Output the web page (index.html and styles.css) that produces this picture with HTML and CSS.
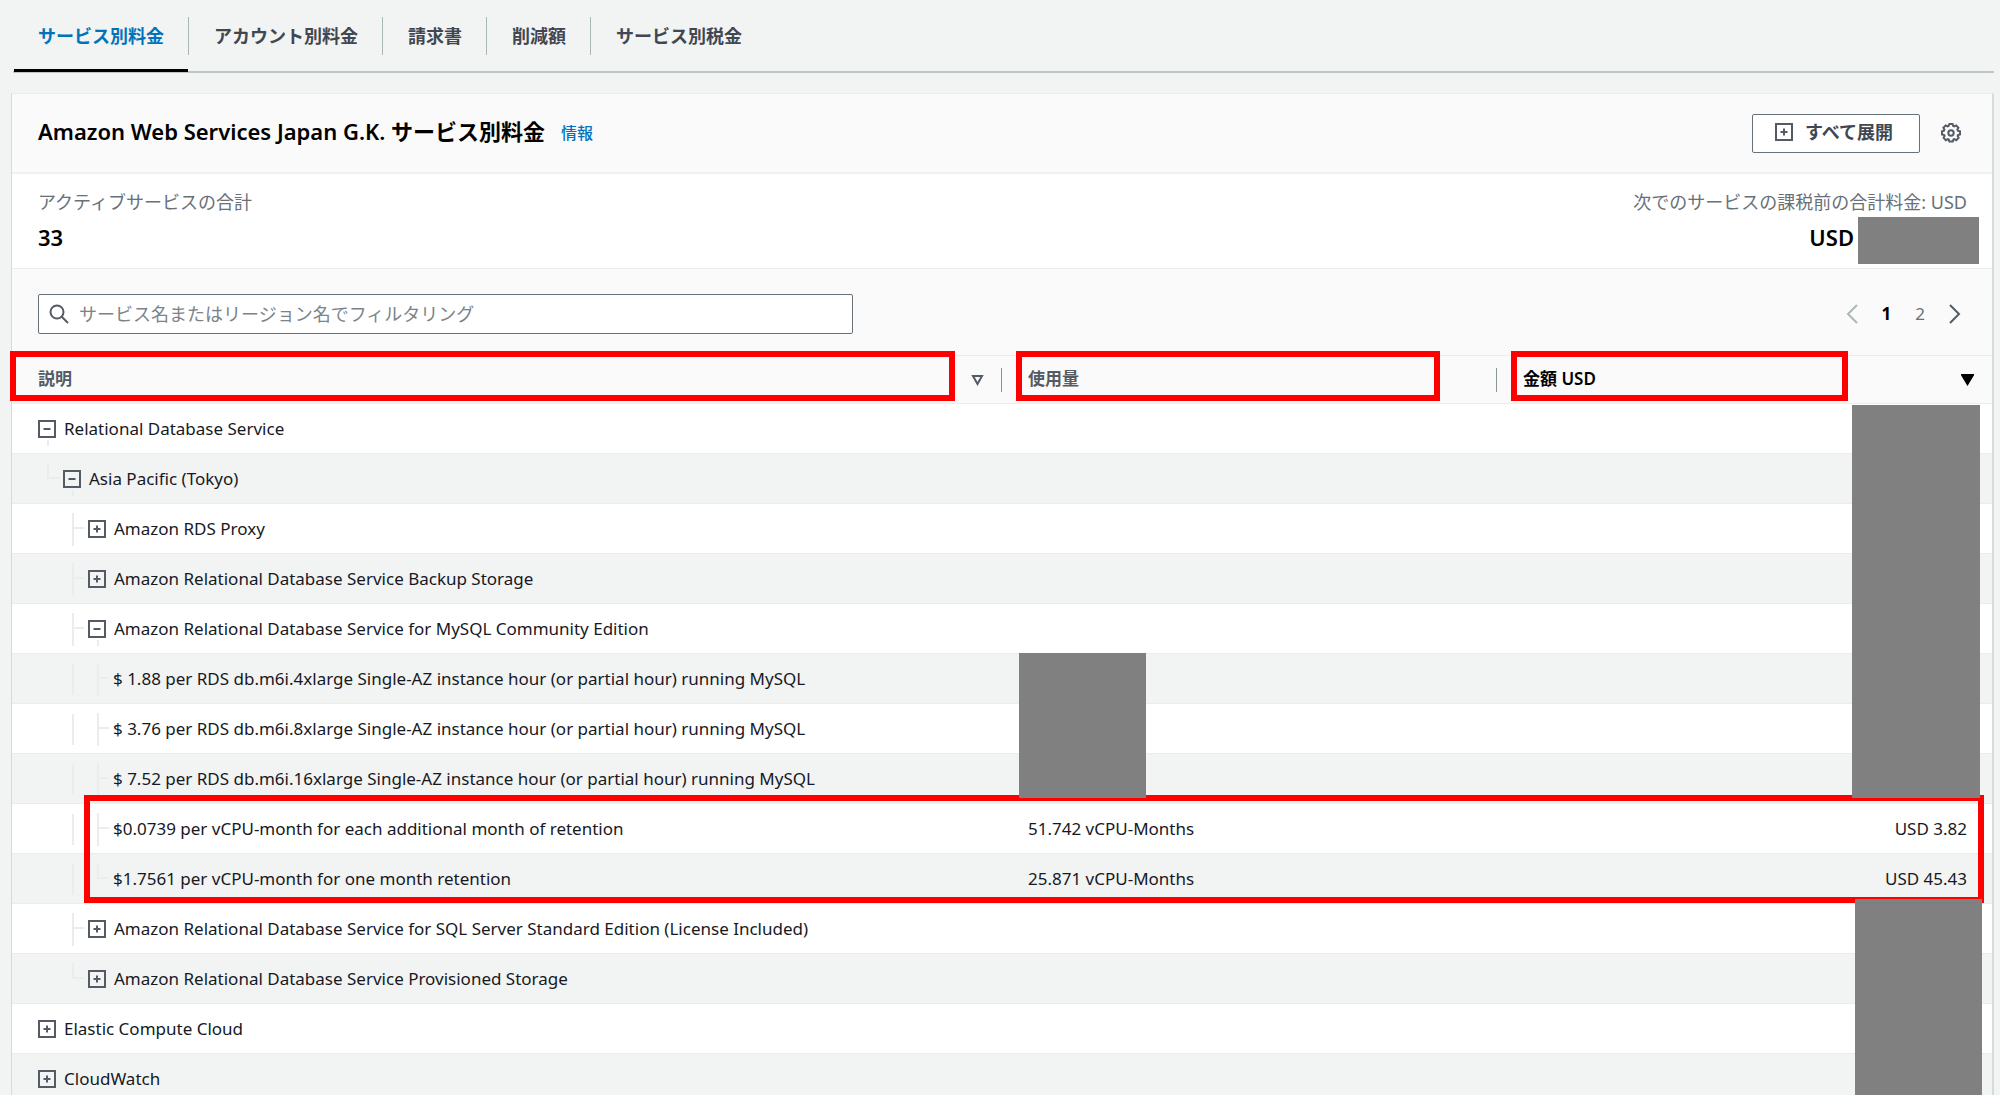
FILE: index.html
```html
<!DOCTYPE html>
<html lang="ja">
<head>
<meta charset="utf-8">
<title>サービス別料金</title>
<link rel="stylesheet" href="styles.css">
</head>
<body>
<svg class="defs" aria-hidden="true">
  <symbol id="plus" viewBox="0 0 18 18"><path d="M1 1h16v16H1zM5.500 9h7M9 5.500v7"/></symbol>
  <symbol id="minus" viewBox="0 0 18 18"><path d="M1 1h16v16H1zM5.500 9h7"/></symbol>
  <symbol id="tee" viewBox="0 0 25 50"><path d="M10 9v33M10 24h11"/></symbol>
  <symbol id="elbow" viewBox="0 0 25 50"><path d="M10 9v15h11"/></symbol>
  <symbol id="line" viewBox="0 0 25 50"><path d="M10 10v31"/></symbol>
</svg>

<nav class="tabs">
  <a class="tab active" href="#services">サービス別料金</a>
  <a class="tab" href="#accounts">アカウント別料金</a>
  <a class="tab" href="#invoices">請求書</a>
  <a class="tab" href="#savings">削減額</a>
  <a class="tab" href="#taxes">サービス別税金</a>
</nav>

<main class="card">
  <header class="card-head">
    <h1>Amazon Web Services Japan G.K. サービス別料金</h1>
    <a class="info" href="#info">情報</a>
    <button class="expand" type="button"><svg class="icon"><use href="#plus"/></svg>すべて展開</button>
    <button class="gear" type="button" aria-label="設定">
      <svg viewBox="0 0 20 20"><path d="M8.4 1h3.2l.6 2 1 .4 1.9-1 2.3 2.3-1 1.900.4 1 2.200.6v3.200l-2 .6-.4 1 1 1.900-2.300 2.300-1.900-1-1 .4-.6 2H8.400l-.6-2-1-.4-1.900 1-2.300-2.300 1-1.900-.4-1-2.200-.6V8.200l2-.6.4-1-1-1.900 2.300-2.300 1.900 1 1-.4z"/><circle cx="10" cy="10" r="2.700"/></svg>
    </button>
  </header>

  <section class="summary">
    <div>
      <p class="label">アクティブサービスの合計</p>
      <p class="value">33</p>
    </div>
    <div class="total">
      <p class="label">次でのサービスの課税前の合計料金: USD</p>
      <p class="value">USD<span class="mask"></span></p>
    </div>
  </section>

  <section class="filter">
    <label class="search">
      <svg viewBox="0 0 20 20"><circle cx="8" cy="8" r="6.500"/><path d="M12.500 12.500 19 19"/></svg>
      <input type="text" aria-label="フィルタリング" placeholder="サービス名またはリージョン名でフィルタリング">
    </label>
    <div class="pages">
      <button type="button" class="prev" aria-label="前へ"><svg viewBox="0 0 12 20"><path d="M11 1 2 10l9 9"/></svg></button>
      <button type="button" class="current">1</button>
      <button type="button">2</button>
      <button type="button" class="next" aria-label="次へ"><svg viewBox="0 0 12 20"><path d="m1 1 9 9-9 9"/></svg></button>
    </div>
  </section>

  <div class="table-wrap">
    <table>
      <thead>
        <tr>
          <th class="desc">説明<svg class="sort" viewBox="0 0 13 12"><path d="M2 2h9L6.500 10z"/></svg></th>
          <th class="usage">使用量</th>
          <th class="amount">金額 USD<svg class="sort filled" viewBox="0 0 13 12"><path d="M1 1h11L6.500 10z"/></svg></th>
        </tr>
      </thead>
      <tbody>
        <tr><td><div class="node"><button class="toggle open" type="button" aria-label="折りたたむ"><svg class="icon"><use href="#minus"/></svg></button>Relational Database Service</div></td><td></td><td></td></tr>
        <tr><td><div class="node"><svg class="guide"><use href="#elbow"/></svg><button class="toggle open" type="button" aria-label="折りたたむ"><svg class="icon"><use href="#minus"/></svg></button>Asia Pacific (Tokyo)</div></td><td></td><td></td></tr>
        <tr><td><div class="node"><svg class="guide"></svg><svg class="guide"><use href="#tee"/></svg><button class="toggle" type="button" aria-label="展開"><svg class="icon"><use href="#plus"/></svg></button>Amazon RDS Proxy</div></td><td></td><td></td></tr>
        <tr><td><div class="node"><svg class="guide"></svg><svg class="guide"><use href="#tee"/></svg><button class="toggle" type="button" aria-label="展開"><svg class="icon"><use href="#plus"/></svg></button>Amazon Relational Database Service Backup Storage</div></td><td></td><td></td></tr>
        <tr><td><div class="node"><svg class="guide"></svg><svg class="guide"><use href="#tee"/></svg><button class="toggle open" type="button" aria-label="折りたたむ"><svg class="icon"><use href="#minus"/></svg></button>Amazon Relational Database Service for MySQL Community Edition</div></td><td></td><td></td></tr>
        <tr><td><div class="node"><svg class="guide"></svg><svg class="guide"><use href="#line"/></svg><svg class="guide"><use href="#tee"/></svg>$ 1.88 per RDS db.m6i.4xlarge Single-AZ instance hour (or partial hour) running MySQL</div></td><td></td><td></td></tr>
        <tr><td><div class="node"><svg class="guide"></svg><svg class="guide"><use href="#line"/></svg><svg class="guide"><use href="#tee"/></svg>$ 3.76 per RDS db.m6i.8xlarge Single-AZ instance hour (or partial hour) running MySQL</div></td><td></td><td></td></tr>
        <tr><td><div class="node"><svg class="guide"></svg><svg class="guide"><use href="#line"/></svg><svg class="guide"><use href="#tee"/></svg>$ 7.52 per RDS db.m6i.16xlarge Single-AZ instance hour (or partial hour) running MySQL</div></td><td></td><td></td></tr>
        <tr><td><div class="node"><svg class="guide"></svg><svg class="guide"><use href="#line"/></svg><svg class="guide"><use href="#tee"/></svg>$0.0739 per vCPU-month for each additional month of retention</div></td><td>51.742 vCPU-Months</td><td>USD 3.82</td></tr>
        <tr><td><div class="node"><svg class="guide"></svg><svg class="guide"><use href="#line"/></svg><svg class="guide"><use href="#elbow"/></svg>$1.7561 per vCPU-month for one month retention</div></td><td>25.871 vCPU-Months</td><td>USD 45.43</td></tr>
        <tr><td><div class="node"><svg class="guide"></svg><svg class="guide"><use href="#tee"/></svg><button class="toggle" type="button" aria-label="展開"><svg class="icon"><use href="#plus"/></svg></button>Amazon Relational Database Service for SQL Server Standard Edition (License Included)</div></td><td></td><td></td></tr>
        <tr><td><div class="node"><svg class="guide"></svg><svg class="guide"><use href="#elbow"/></svg><button class="toggle" type="button" aria-label="展開"><svg class="icon"><use href="#plus"/></svg></button>Amazon Relational Database Service Provisioned Storage</div></td><td></td><td></td></tr>
        <tr><td><div class="node"><button class="toggle" type="button" aria-label="展開"><svg class="icon"><use href="#plus"/></svg></button>Elastic Compute Cloud</div></td><td></td><td></td></tr>
        <tr><td><div class="node"><button class="toggle" type="button" aria-label="展開"><svg class="icon"><use href="#plus"/></svg></button>CloudWatch</div></td><td></td><td></td></tr>
      </tbody>
    </table>
    <div class="highlight"></div>
    <div class="cover cover-usage"></div>
    <div class="cover cover-upper"></div>
    <div class="cover cover-lower"></div>
  </div>
</main>
</body>
</html>
```
FILE: styles.css
```css
*, *::before, *::after { box-sizing: border-box; }

body {
  margin: 0;
  height: 100vh;
  overflow: hidden;
  background: #f2f3f3;
  color: #16191f;
  font-family: "Noto Sans", "Noto Sans CJK JP", sans-serif;
  font-size: 17px;
  line-height: 24px;
}

h1, p { margin: 0; }
a { text-decoration: none; }
button {
  margin: 0;
  padding: 0;
  border: 0;
  background: none;
  color: inherit;
  font: inherit;
}
svg { display: block; fill: none; stroke: #545b64; stroke-width: 2; }
.defs { position: absolute; width: 0; height: 0; }
.icon { width: 18px; height: 18px; }

/* Tabs */
.tabs {
  display: flex;
  margin: 0 6px 0 13px;
  height: 73px;
  padding-top: 17px;
  border-bottom: 2px solid #bcc6c7;
}
.tab {
  position: relative;
  height: 38px;
  padding: 7px 24px 0 25px;
  border-right: 1px solid #aab7b8;
  color: #414750;
  font-size: 18px;
  font-weight: 600;
}
.tab:last-child { border-right: 0; }
.tab.active { color: #0073bb; }
.tab.active::after {
  content: "";
  position: absolute;
  left: 1px;
  right: 0;
  bottom: -17px;
  height: 3px;
  background: #000;
}

/* Card */
.card {
  margin: 20px 6px 0 11px;
  border: 1px solid #d5dbdb;
  border-top-color: #eaeded;
  border-right-width: 2px;
  background: #fff;
}
.card-head {
  display: flex;
  align-items: center;
  height: 80px;
  padding: 0 31px 0 26px;
  background: #fafafa;
  border-bottom: 2px solid #eff0f0;
}
h1 {
  padding-bottom: 4px;
  font-size: 22px;
  font-weight: 600;
  line-height: 30px;
  color: #000;
}
.info {
  margin-left: 16px;
  color: #0073bb;
  font-size: 16px;
  font-weight: 500;
}
.expand {
  display: flex;
  align-items: center;
  gap: 12px;
  margin-left: auto;
  height: 39px;
  padding: 0 26px 2px 22px;
  border: 1px solid #687078;
  border-radius: 2px;
  background: #fff;
  color: #414750;
  font-size: 18px;
  font-weight: 600;
}
.gear { margin-left: 21px; }
.gear svg { width: 20px; height: 20px; }

.summary {
  display: flex;
  justify-content: space-between;
  height: 95px;
  padding: 14px 25px 0 26px;
  border-bottom: 1px solid #eaeded;
}
.label { color: #687078; font-size: 18px; line-height: 29px; }
.value { color: #000; font-size: 22px; font-weight: 600; line-height: 40px; }
.total { text-align: right; }
.total .value {
  display: flex;
  justify-content: flex-end;
  gap: 4px;
  margin-right: -12px;
}
.mask { width: 121px; height: 47px; background: #808080; }

.filter {
  display: flex;
  align-items: center;
  justify-content: space-between;
  height: 86px;
  padding: 10px 31px 6px 26px;
  background: #fafafa;
}
.search {
  display: flex;
  align-items: center;
  gap: 10px;
  flex: 0 1 815px;
  height: 40px;
  padding: 0 10px;
  border: 1px solid #687078;
  border-radius: 2px;
  background: #fff;
}
.search svg { width: 20px; height: 20px; }
.search input {
  flex: 1;
  min-width: 0;
  padding: 0;
  border: 0;
  outline: 0;
  background: none;
  font: inherit;
  font-size: 18px;
}
.search input::placeholder { color: #7b838a; opacity: 1; }
.pages { display: flex; align-items: center; color: #687078; }
.pages svg { width: 12px; height: 20px; }
.pages button + button { margin-left: 24px; }
.pages .prev svg { stroke: #aab7b8; }
.pages .current { color: #000; font-weight: 700; }

/* Table */
.table-wrap { position: relative; }
table {
  width: 100%;
  table-layout: fixed;
  border-collapse: separate;
  border-spacing: 0;
}
th {
  position: relative;
  height: 49px;
  padding: 0 16px 2px 26px;
  background: #fafafa;
  border-top: 1px solid #eaeded;
  border-bottom: 1px solid #eaeded;
  color: #545b64;
  font-size: 17px;
  font-weight: 600;
  text-align: left;
}
.desc { width: 50%; }
.usage { width: 25%; }
.amount { width: 25%; color: #000; }
/* Column dividers */
.desc::after, .usage::after {
  content: "";
  position: absolute;
  right: 0;
  top: 12px;
  width: 1px;
  height: 24px;
  background: #879596;
}
/* Header frames */
th::before {
  content: "";
  position: absolute;
  left: 14px;
  right: 57px;
  top: -5px;
  height: 50px;
  border: 6px solid #f00;
}
.desc::before { left: -2px; right: 47px; }
.amount::before { right: 144px; }
.sort {
  position: absolute;
  right: 18px;
  top: 18px;
  width: 13px;
  height: 12px;
}
.sort.filled { fill: #000; stroke: #000; }

td {
  height: 50px;
  padding: 0 26px;
  border-bottom: 1px solid #eaeded;
  white-space: nowrap;
}
td:last-child { padding-right: 25px; text-align: right; }
tbody tr:nth-child(even) { background: #f2f3f3; }
.node { display: flex; align-items: center; height: 49px; }
.guide { flex: none; width: 25px; height: 50px; stroke: #eaeded; }
.toggle { position: relative; flex: none; margin-right: 8px; }
.toggle.open::after {
  content: "";
  position: absolute;
  left: 9px;
  top: 20px;
  width: 2px;
  height: 6px;
  background: #eaeded;
}

/* Overlays on the table */
.highlight, .cover { position: absolute; }
.highlight { left: 72px; right: 8px; top: 440px; height: 108px; border: 6px solid #f00; }
.cover { background: #808080; }
.cover-usage { left: calc(50% + 17px); top: 298px; width: 127px; height: 145px; }
.cover-upper { right: 12px; top: 50px; width: 128px; height: 393px; }
.cover-lower { right: 10px; top: 544px; bottom: 0; width: 127px; }
```
